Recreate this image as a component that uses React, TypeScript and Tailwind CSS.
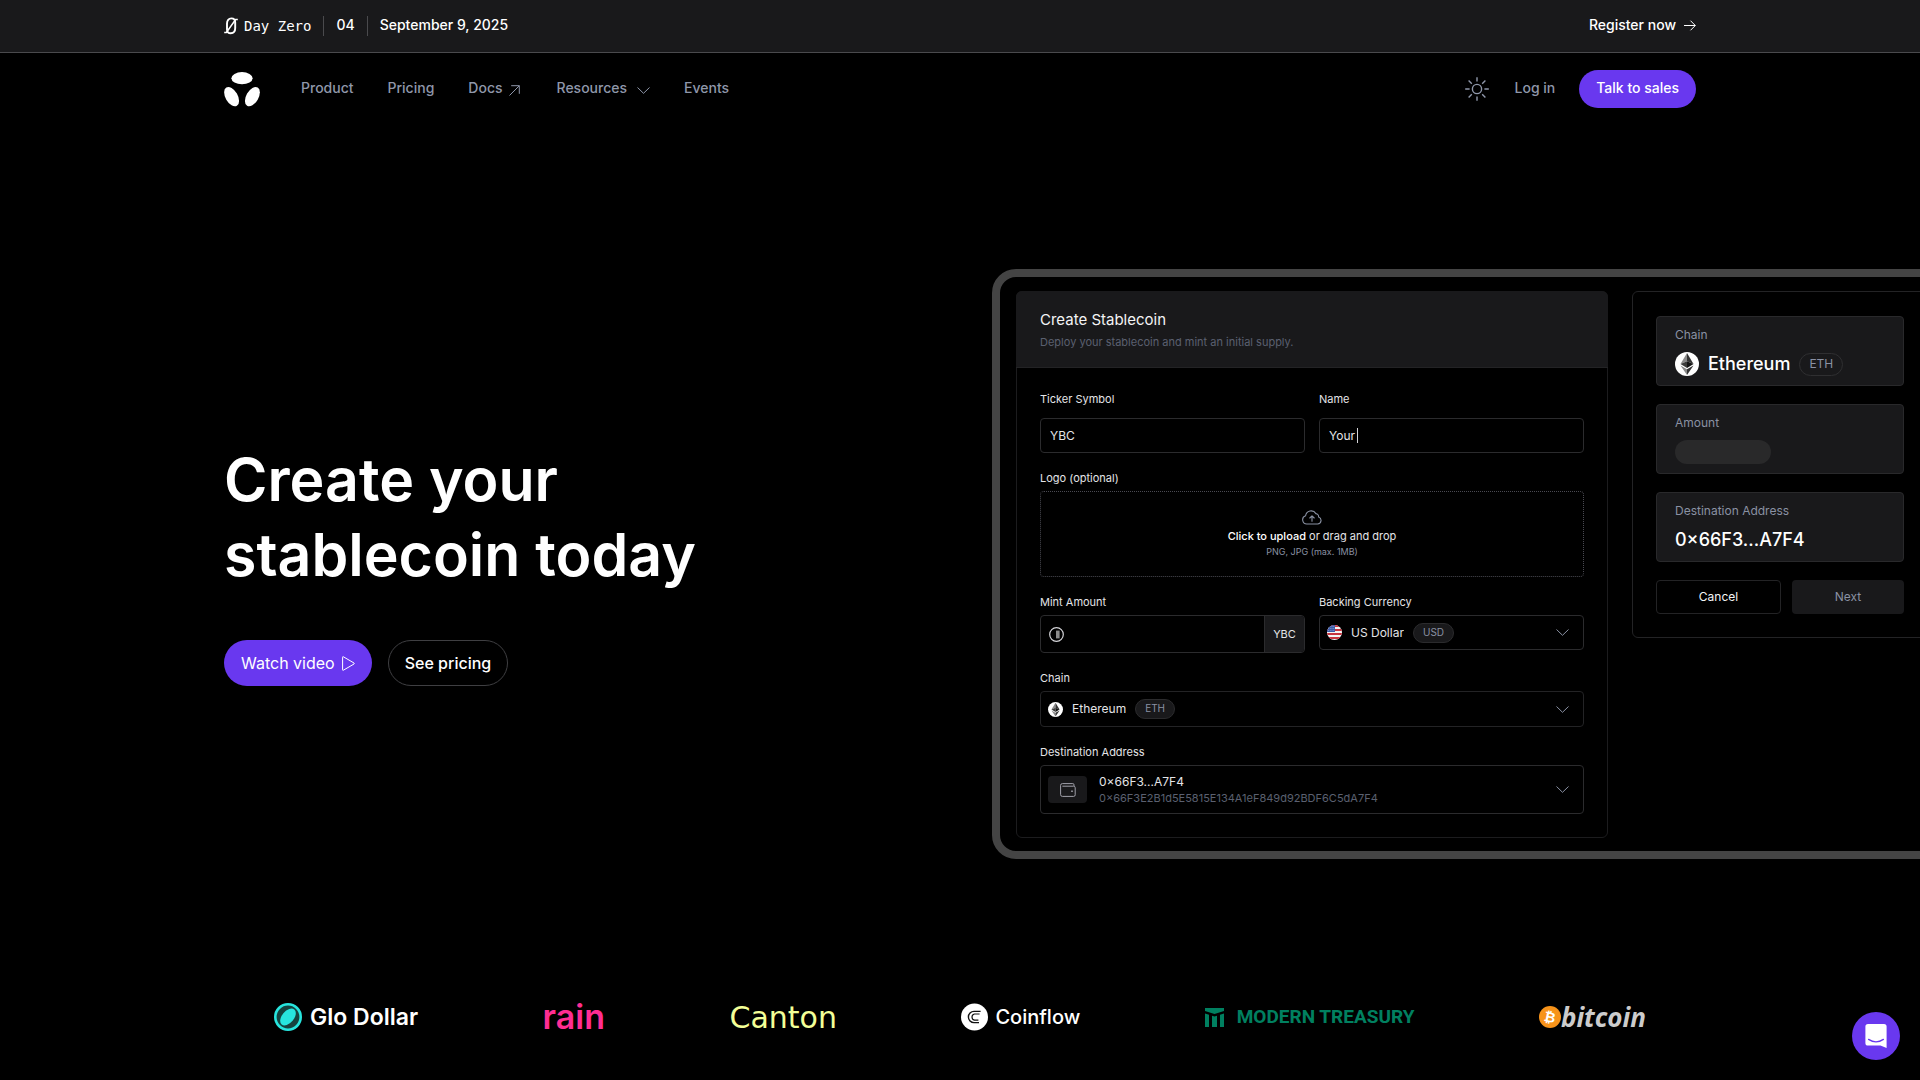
import React, { ReactNode } from 'react';

const NAV_LINKS = [
  { label: 'Product', icon: null },
  { label: 'Pricing', icon: null },
  { label: 'Docs', icon: 'external' },
  { label: 'Resources', icon: 'chevron' },
  { label: 'Events', icon: null },
];

function ChevronIcon({ className }: { className?: string }) {
  return (
    <svg className={className} viewBox="0 0 13 7" width="13" height="7" fill="none" stroke="currentColor">
      <path d="M0.5 0.5L6.5 6.3L12.5 0.5" />
    </svg>
  );
}

function BrandLogo() {
  return (
    <svg width="36" height="36" viewBox="0 0 36 36" fill="#fff">
      <ellipse cx="18" cy="7.2" rx="10.6" ry="6.1" />
      <ellipse cx="7.6" cy="25.6" rx="10.6" ry="6.1" transform="rotate(60 7.6 25.6)" />
      <ellipse cx="28.4" cy="25.6" rx="10.6" ry="6.1" transform="rotate(-60 28.4 25.6)" />
    </svg>
  );
}

function EthIcon({ className }: { className?: string }) {
  return (
    <svg className={className} viewBox="0 0 24 24">
      <circle cx="12" cy="12" r="12" fill="#fff" />
      <path d="M12 1L5.5 12L12 9.2Z" fill="#8a8a8a" />
      <path d="M12 1L18.5 12L12 9.2Z" fill="#343434" />
      <path d="M5.5 12L12 9.2V16Z" fill="#3c3c3b" />
      <path d="M18.5 12L12 9.2V16Z" fill="#141414" />
      <path d="M5.5 13.4L12 17.3V23Z" fill="#8a8a8a" />
      <path d="M18.5 13.4L12 17.3V23Z" fill="#343434" />
    </svg>
  );
}

function FlagIcon() {
  return (
    <svg className="size-[15px] shrink-0 rounded-full" viewBox="0 0 15 15">
      <rect width="15" height="15" fill="#f5f5f5" />
      <path d="M0 1H15M0 5H15M0 9H15M0 13H15" stroke="#c8343f" strokeWidth="2" />
      <rect width="8" height="7" fill="#3b5ba9" />
      <path d="M1 1.5H8M1 3.5H8M1 5.5H8" stroke="#b9c6e6" strokeWidth="0.6" strokeDasharray="0.8 1" />
    </svg>
  );
}

function Banner() {
  return (
    <div className="border-b border-[#4a4a4d] bg-[#19191b] px-6">
      <div className="mx-auto flex h-[52px] max-w-[1472px] items-center justify-between text-sm font-medium text-white">
        <div className="flex items-center">
          <svg width="14" height="18" viewBox="0 0 14 18" fill="none" stroke="#fff">
            <path d="M3 12.4V6.6C3 3.4 4.6 1.4 7.4 1.4C10 1.4 11.2 3 11.2 5.6V11C11.2 14.4 9.6 16.2 6.8 16.2C4.4 16.2 3 14.8 3 12.4Z" strokeWidth="1.9" />
            <path d="M0.2 15.4H2.4L11.6 2.6H13.8" strokeWidth="1.5" />
          </svg>
          <span className="ml-1.5 font-['DejaVu_Sans_Mono',monospace]">Day Zero</span>
          <span className="ml-3 h-5 w-px bg-[#4a4a4d]" />
          <span className="ml-3 pb-0.5">04</span>
          <span className="ml-3 h-5 w-px bg-[#4a4a4d]" />
          <span className="ml-3 pb-0.5">September 9, 2025</span>
        </div>
        <a href="#register" className="flex items-center gap-2 pb-px">
          <span className="pb-px">Register now</span>
          <svg width="12" height="11" viewBox="0 0 12 11" fill="none" stroke="currentColor">
            <path d="M0 5.5H11.2M6.5 0.7L11.3 5.5L6.5 10.3" />
          </svg>
        </a>
      </div>
    </div>
  );
}

function NavBar() {
  return (
    <header className="px-6">
      <div className="mx-auto flex h-[72px] max-w-[1472px] items-center justify-between text-sm font-medium text-[#8f97aa]">
        <div className="flex items-center">
          <a href="#home" aria-label="Home"><BrandLogo /></a>
          <nav className="ml-[41px] flex items-center gap-[34px] pb-0.5">
            {NAV_LINKS.map(({ label, icon }) => (
              <a key={label} href={`#${label.toLowerCase()}`} className="flex items-center gap-1.5">
                {label}
                {icon === 'external' && (
                  <svg className="mt-1 mr-[3px]" width="11" height="11" viewBox="0 0 11 11" fill="none" stroke="currentColor">
                    <path d="M0.5 10.5L10.3 0.7M2.2 0.7H10.3V8.8" />
                  </svg>
                )}
                {icon === 'chevron' && <ChevronIcon className="mt-1 ml-1" />}
              </a>
            ))}
          </nav>
        </div>
        <div className="flex items-center">
          <button type="button" aria-label="Toggle theme">
            <svg width="24" height="24" viewBox="0 0 24 24" fill="none" stroke="currentColor" strokeWidth="1.4">
              <circle cx="12" cy="12" r="4.6" />
              <path d="M12 0.2V4.6M12 19.4V23.8M0.2 12H4.6M19.4 12H23.8M3.6 3.6L6.8 6.8M17.2 17.2L20.4 20.4M3.6 20.4L6.8 17.2M17.2 6.8L20.4 3.6" />
            </svg>
          </button>
          <a href="#login" className="ml-[26px] pb-0.5">Log in</a>
          <a href="#sales" className="ml-6 flex h-[38px] items-center rounded-full bg-[#6938ef] px-[17px] pb-0.5 text-white">Talk to sales</a>
        </div>
      </div>
    </header>
  );
}

function Pill({ children }: { children: ReactNode }) {
  return (
    <span className="flex h-5 items-center rounded-full border border-[#2b2b2d] bg-[#19191b] px-[9px] text-[10px] text-[#8a91a3]">
      {children}
    </span>
  );
}

interface FieldProps {
  id: string;
  label: string;
  className?: string;
  children: ReactNode;
}

function Field({ id, label, className = 'gap-[5px]', children }: FieldProps) {
  return (
    <div className={`flex flex-col ${className}`}>
      <label htmlFor={id} className="text-[11px] leading-4 text-[#e4e4e7]">{label}</label>
      {children}
    </div>
  );
}

function CreateForm() {
  return (
    <form className="w-[592px] rounded-md border border-[#1c1c1e] text-xs text-[#e4e4e7]">
      <div className="-mx-px -mt-px h-[77px] rounded-t-md border-b border-[#232325] bg-[#19191b] px-6 pt-[17px]">
        <h2 className="text-[15px] leading-6 text-[#f4f4f5]">Create Stablecoin</h2>
        <p className="text-[11px] leading-5 text-[#5b6070]">Deploy your stablecoin and mint an initial supply.</p>
      </div>
      <div className="flex flex-col gap-[17px] px-[23px] pt-[23px] pb-[23px]">
        <div className="grid grid-cols-2 gap-3.5">
          <Field id="ticker" label="Ticker Symbol" className="gap-[11px]">
            <input id="ticker" defaultValue="YBC" className="h-[35px] w-full rounded border border-[#2b2b2d] bg-transparent px-[9px]" />
          </Field>
          <Field id="name" label="Name" className="gap-[11px]">
            <div className="flex h-[35px] items-center rounded border border-[#2b2b2d] px-[9px]">
              <input id="name" defaultValue="Your" className="w-[28px] bg-transparent" />
              <span className="h-[15px] w-px bg-[#d4d4d8]" />
            </div>
          </Field>
        </div>
        <Field id="logo" label="Logo (optional)">
          <label htmlFor="logo" className="flex h-[86px] flex-col items-center rounded border border-dotted border-[#4a4a52] pt-[18px]">
            <input id="logo" type="file" className="sr-only" />
            <svg width="20" height="15" viewBox="0 0 20 15" fill="none" stroke="#8a91a3" strokeWidth="1.1" strokeLinecap="round" strokeLinejoin="round">
              <path d="M5 14A4.2 4.2 0 0 1 3.6 5.8A5.6 5.6 0 0 1 13.9 3.6A3 3 0 0 1 16.6 7A3.6 3.6 0 0 1 15.6 14Z" />
              <path d="M10 11.2V6M7.8 8L10 5.8L12.2 8" />
            </svg>
            <span className="mt-[3px] text-[11px] leading-4"><span className="font-medium text-white">Click to upload</span> or drag and drop</span>
            <span className="text-[9px] leading-4 text-[#8a91a3]">PNG, JPG (max. 1MB)</span>
          </label>
        </Field>
        <div className="grid grid-cols-2 gap-3.5">
          <Field id="mint" label="Mint Amount">
            <div className="flex h-[38px] items-center overflow-hidden rounded border border-[#2b2b2d]">
              <svg className="ml-2 shrink-0" width="15" height="15" viewBox="0 0 15 15" fill="none" stroke="#d4d4d8" strokeWidth="1.2">
                <circle cx="7.5" cy="7.5" r="6.8" />
                <rect x="7" y="3.6" width="3.6" height="7.8" fill="#8a8a8a" stroke="none" />
              </svg>
              <input id="mint" className="min-w-0 flex-1 bg-transparent px-2" />
              <span className="flex h-full w-10 items-center justify-center border-l border-[#2b2b2d] bg-[#19191b] text-[11px]">YBC</span>
            </div>
          </Field>
          <Field id="currency" label="Backing Currency">
            <div className="flex h-[35px] items-center rounded border border-[#2b2b2d] pr-[14px] pl-[7px]">
              <FlagIcon />
              <select id="currency" className="ml-[9px] appearance-none bg-transparent [field-sizing:content]">
                <option>US Dollar</option>
              </select>
              <span className="ml-[9px]"><Pill>USD</Pill></span>
              <ChevronIcon className="ml-auto text-[#8a91a3]" />
            </div>
          </Field>
        </div>
        <Field id="chain" label="Chain">
          <div className="flex h-9 items-center rounded border border-[#232325] pr-[14px] pl-[7px]">
            <EthIcon className="size-[15px] shrink-0" />
            <select id="chain" className="ml-[9px] appearance-none bg-transparent [field-sizing:content]">
              <option>Ethereum</option>
            </select>
            <span className="ml-[9px]"><Pill>ETH</Pill></span>
            <ChevronIcon className="ml-auto text-[#8a91a3]" />
          </div>
        </Field>
        <Field id="destination" label="Destination Address">
          <div className="flex h-[49px] items-center rounded border border-[#2b2b2d] pr-[14px] pl-[7px]">
            <span className="flex h-[27px] w-[39px] items-center justify-center rounded bg-[#19191b]">
              <svg width="16" height="14" viewBox="0 0 16 14" fill="none" stroke="#a1a1aa">
                <path d="M14 3V1.8A1.2 1.2 0 0 0 12.8 0.6H2.4A1.8 1.8 0 0 0 0.6 2.4V11.6A1.8 1.8 0 0 0 2.4 13.4H13.6A1.6 1.6 0 0 0 15.2 11.8V4.8A1.6 1.6 0 0 0 13.6 3.2H2.4" />
                <circle cx="12" cy="8.2" r="0.5" fill="#a1a1aa" />
              </svg>
            </span>
            <div className="ml-3 flex flex-col">
              <select id="destination" className="appearance-none bg-transparent leading-4">
                <option>0×66F3...A7F4</option>
              </select>
              <span className="text-[11px] leading-4 text-[#5b6070]">0×66F3E2B1d5E5815E134A1eF849d92BDF6C5dA7F4</span>
            </div>
            <ChevronIcon className="ml-auto text-[#8a91a3]" />
          </div>
        </Field>
      </div>
    </form>
  );
}

function SummaryCard({ label, children }: { label: string; children: ReactNode }) {
  return (
    <div className="h-[70px] rounded border border-[#29292b] bg-[#19191b] px-[18px] pt-2.5">
      <p className="text-xs leading-4 text-[#8a91a3]">{label}</p>
      <div className="mt-[9px] flex h-6 items-center text-lg font-medium text-white">{children}</div>
    </div>
  );
}

function Summary() {
  return (
    <aside className="flex w-[296px] flex-col gap-[18px] rounded-md border border-[#232325] px-[23px] pt-6 pb-[23px]">
      <SummaryCard label="Chain">
        <EthIcon className="size-6 shrink-0" />
        <span className="ml-[9px]">Ethereum</span>
        <span className="ml-[9px] flex h-[23px] items-center rounded-full border border-[#2f2f31] px-[9px] text-xs font-normal text-[#8a91a3]">ETH</span>
      </SummaryCard>
      <SummaryCard label="Amount">
        <span className="h-6 w-24 rounded-full bg-[#29292a]" />
      </SummaryCard>
      <SummaryCard label="Destination Address">0×66F3...A7F4</SummaryCard>
      <div className="flex gap-[11px] text-xs">
        <button type="button" className="h-[34px] w-[125px] rounded border border-[#232325] text-[#f4f4f5]">Cancel</button>
        <button type="button" className="h-[34px] flex-1 rounded bg-[#19191b] text-[#8a91a3]">Next</button>
      </div>
    </aside>
  );
}

function Hero() {
  return (
    <section className="px-6 pt-36">
      <div className="mx-auto grid max-w-[1472px] grid-cols-2 items-center gap-16">
        <div>
          <h1 className="text-[59px] leading-[75px] font-semibold text-white">
            Create your<br />stablecoin today
          </h1>
          <div className="mt-12 flex gap-4 text-base">
            <button type="button" className="flex h-[46px] items-center gap-[7px] rounded-full bg-[#6938ef] px-[17px] text-white">
              Watch video
              <svg width="13" height="15" viewBox="0 0 13 15" fill="none" stroke="currentColor" strokeLinejoin="round">
                <path d="M0.6 1.2V13.8Q0.6 14.6 1.4 14.2L12 8Q12.6 7.5 12 7L1.4 0.8Q0.6 0.4 0.6 1.2Z" />
              </svg>
            </button>
            <a href="#pricing" className="flex h-[46px] items-center rounded-full border border-[#3f3f42] px-4 font-medium text-white">See pricing</a>
          </div>
        </div>
        <div className="flex w-max items-start gap-6 rounded-3xl border-8 border-[#444] px-4 pt-3.5 pb-[13px]">
          <CreateForm />
          <Summary />
        </div>
      </div>
    </section>
  );
}

function Logos() {
  return (
    <section className="px-6 pt-36 pb-12">
      <div className="mx-auto flex h-7 max-w-[1472px] items-center justify-between px-[50px] whitespace-nowrap">
        <div className="flex items-center gap-2 text-[23px] font-semibold text-white">
          <svg width="28" height="28" viewBox="0 0 28 28">
            <circle cx="14" cy="14" r="12.7" fill="#15433f" stroke="#27e5de" strokeWidth="2.6" />
            <ellipse cx="14" cy="14" rx="9.8" ry="6" fill="#27e5de" transform="rotate(-50 14 14)" />
          </svg>
          Glo Dollar
        </div>
        <div className="text-[34px] leading-7 font-semibold text-[#ff2d92]">rain</div>
        <div className="pt-0.5 font-['DejaVu_Sans',sans-serif] text-[30px] leading-7 text-[#f3ff97]">Canton</div>
        <div className="flex items-center gap-[7px] text-xl font-medium text-white">
          <svg width="27" height="28" viewBox="0 0 27 28" fill="none" stroke="#111">
            <circle cx="13.5" cy="14" r="13.5" fill="#fff" stroke="none" />
            <path d="M19.6 8.4H13A5.6 5.6 0 0 0 13 19.6H18" strokeWidth="1.4" />
            <path d="M18.6 11H13.4A3.2 3.2 0 0 0 13.4 17.2H17.4" strokeWidth="1.2" />
          </svg>
          Coinflow
        </div>
        <div className="flex items-center gap-[13px] font-['Roboto',sans-serif] text-[19px] font-bold text-[#008060]">
          <svg width="19" height="19" viewBox="0 0 19 19" fill="currentColor">
            <path d="M0 0H19V3L9.5 6L0 3Z" />
            <path d="M0 5.4L4 6.7V19H0ZM7 7.8L9.5 8.6L12 7.8V19H7ZM19 5.4L15 6.7V19H19Z" />
          </svg>
          MODERN TREASURY
        </div>
        <div className="flex items-center font-['Open_Sans',sans-serif] text-[26px] font-bold text-[#ccc] italic">
          <svg width="22" height="22" viewBox="0 0 22 22">
            <circle cx="11" cy="11" r="11" fill="#f7931a" />
            <text x="11" y="16" fontSize="14" fontWeight="700" fontStyle="normal" textAnchor="middle" fill="#fff" transform="rotate(12 11 11)">₿</text>
          </svg>
          bitcoin
        </div>
      </div>
    </section>
  );
}

export default function App() {
  return (
    <div className="min-h-screen overflow-hidden bg-black font-['Inter',sans-serif]">
      <Banner />
      <NavBar />
      <main>
        <Hero />
        <Logos />
      </main>
      <button type="button" aria-label="Open chat" className="fixed right-5 bottom-5 flex size-12 items-center justify-center rounded-full bg-[#6938ef]">
        <svg width="22" height="24" viewBox="0 0 22 24" fill="none">
          <path d="M3 0H19A2.6 2.6 0 0 1 21.6 2.6V24L15.5 21.6H3A2.6 2.6 0 0 1 0.4 19V2.6A2.6 2.6 0 0 1 3 0Z" fill="#fff" />
          <path d="M3.6 15.4Q11 20.4 18.4 15.4" stroke="#6938ef" strokeWidth="1.3" strokeLinecap="round" />
        </svg>
      </button>
    </div>
  );
}
